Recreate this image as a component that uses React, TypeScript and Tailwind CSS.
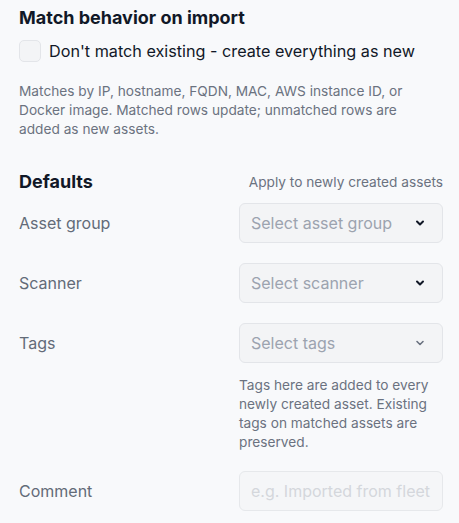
import React from 'react';

type SelectProps = {
  placeholder: string;
  muted?: boolean;
};

const Chevron = ({ muted = false }: { muted?: boolean }) => (
  <svg
    width="10"
    height="10"
    viewBox="0 0 10 10"
    fill="none"
    className={muted ? 'text-[#6b7280]' : 'text-[#111827]'}
  >
    <path d="M2 3.5L5 6.5L8 3.5" stroke="currentColor" strokeWidth={muted ? 1.6 : 2} strokeLinecap="round" strokeLinejoin="round" />
  </svg>
);

const FakeSelect = ({ placeholder, muted = false }: SelectProps) => (
  <div className="w-[204px] h-[40px] flex items-center justify-between pl-[11px] pr-[17px] rounded-md border border-[#e3e5e9] bg-[#f3f4f6]">
    <span className="text-[16px] text-[#9ca3af]">{placeholder}</span>
    <Chevron muted={muted} />
  </div>
);

const Row = ({ label, children }: { label: string; children: React.ReactNode }) => (
  <div className="flex items-center justify-between">
    <span className="text-[16px] text-[#636b78]">{label}</span>
    {children}
  </div>
);

export default function App() {
  return (
    <div
      className="min-h-screen bg-[#f8f9fb] pl-[19px] pr-[16px] pt-[6px] pb-4"
      style={{ fontFamily: 'Inter, "Noto Sans", sans-serif' }}
    >
      <h2 className="text-[18px] leading-[24px] font-bold text-[#111827]">Match behavior on import</h2>

      <label className="mt-[10px] flex items-center gap-[8px]">
        <span className="w-[22px] h-[22px] rounded-[5px] border border-[#e3e5e9] bg-[#f3f4f6]" />
        <span className="text-[16.2px] leading-[22px] text-[#111827]">Don't match existing - create everything as new</span>
      </label>

      <p className="mt-[20px] max-w-[412px] text-[13.7px] leading-[19px] text-[#6b7280]">
        Matches by IP, hostname, FQDN, MAC, AWS instance ID, or Docker image. Matched rows update; unmatched rows are
        added as new assets.
      </p>

      <div className="mt-[31px] flex items-center justify-between">
        <h2 className="text-[18px] leading-[24px] font-bold text-[#111827]">Defaults</h2>
        <span className="text-[13.7px] text-[#6b7280]">Apply to newly created assets</span>
      </div>

      <div className="mt-[9px] flex flex-col gap-[20px]">
        <Row label="Asset group">
          <FakeSelect placeholder="Select asset group" />
        </Row>
        <Row label="Scanner">
          <FakeSelect placeholder="Select scanner" />
        </Row>
        <div>
          <Row label="Tags">
            <FakeSelect placeholder="Select tags" muted />
          </Row>
          <p className="ml-auto mt-[13px] w-[204px] text-[13.7px] leading-[19px] text-[#6b7280]">
            Tags here are added to every newly created asset. Existing tags on matched assets are preserved.
          </p>
        </div>
      </div>

      <div className="mt-[19px]">
        <Row label="Comment">
          <input
            placeholder="e.g. Imported from fleet"
            className="w-[204px] h-[40px] px-[11px] rounded-md border border-[#e6e8eb] bg-[#f5f6f8] text-[16px] outline-none placeholder:text-[#d4d7dc]"
          />
        </Row>
      </div>
    </div>
  );
}
